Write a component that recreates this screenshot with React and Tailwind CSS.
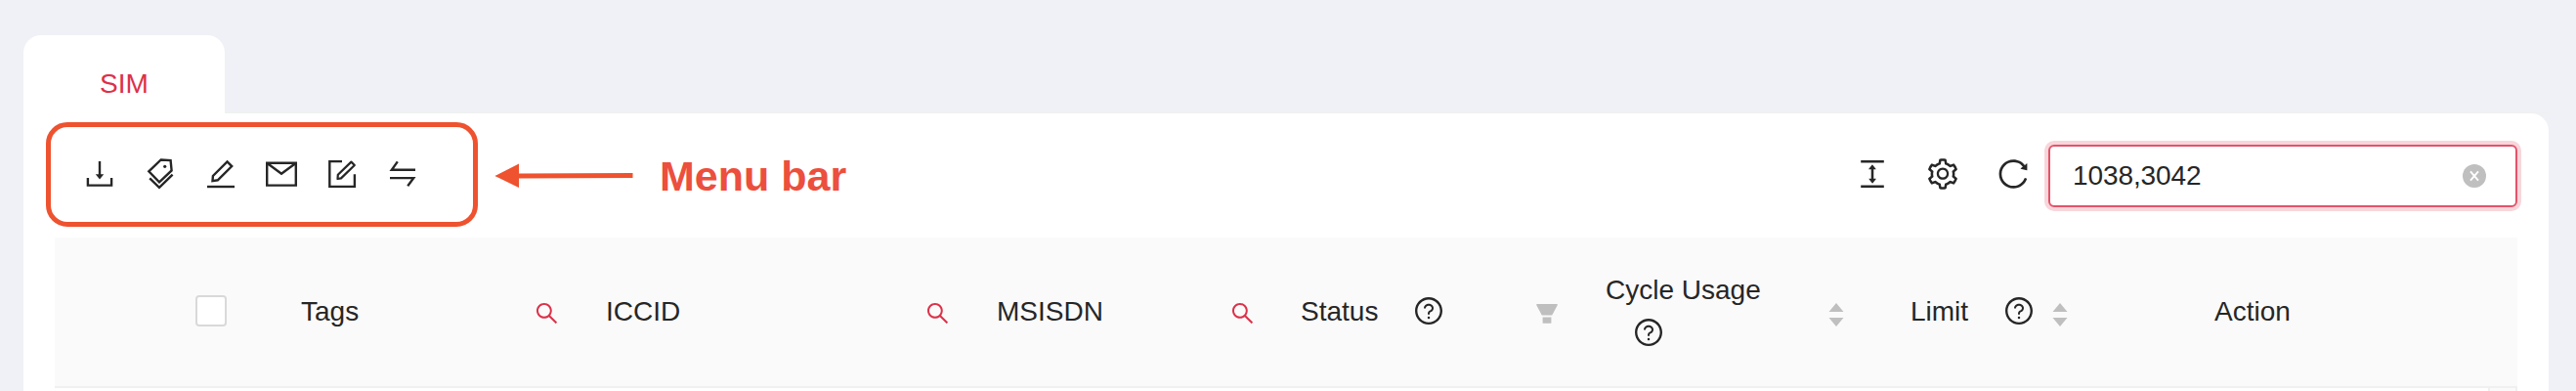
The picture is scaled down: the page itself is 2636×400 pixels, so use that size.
import React from "react";
import {
  AiOutlineColumnHeight,
  AiOutlineSetting,
  AiOutlineReload,
  AiOutlineQuestionCircle,
  AiOutlineSearch,
} from "react-icons/ai";

function Icon({ children }) {
  return (
    <svg viewBox="0 0 32 32" className="size-8 shrink-0" fill="none" stroke="currentColor" strokeWidth="2.4">
      {children}
    </svg>
  );
}

function MenuIcons() {
  return (
    <div className="flex items-center gap-[30px]">
      <Icon>
        <path d="M3.9 20v7.6h24.2V20M16 3v15" />
        <path d="M11.8 16.2h8.4L16 21.5z" fill="currentColor" stroke="none" />
      </Icon>
      <Icon>
        <path d="M16.7 1.5l9.9.6 1 10.400L15 24.300 4.300 13.300z" />
        <path d="M5.2 20.300l9.8 9.600 13.600-13.300" />
        <circle cx="20.7" cy="8.3" r="1.6" fill="currentColor" stroke="none" />
      </Icon>
      <Icon>
        <path d="M22.5 3.4l4.7 4.7-14.4 14.2-5.3.8.4-5.1z" />
        <path d="M2 29h28" />
      </Icon>
      <Icon>
        <path d="M1.2 4.7h29.6v22.9H1.2zM1.5 5L16 15.800 30.500 5" />
      </Icon>
      <Icon>
        <path d="M16 3.1H3.3v25.8h25.600V16.300" />
        <path d="M25.400 3.600l3.400 3.400-13.800 13.400-3.500.6.300-4.200z" strokeWidth="2.2" strokeLinejoin="round" />
      </Icon>
      <Icon>
        <path d="M29 11.800H4.800l6-8.400M3 20.100h24.200l-6 8.200" />
      </Icon>
    </div>
  );
}

function Sorter() {
  return (
    <svg viewBox="0 0 16 24" className="w-4 h-6 shrink-0" fill="#bfbfbf">
      <path d="M8 0l7.5 9H.5zM8 24l7.5-9H.5z" />
    </svg>
  );
}

function Filter() {
  return (
    <svg viewBox="0 0 22 20" className="w-[22px] h-5 shrink-0" fill="#bfbfbf">
      <path d="M.9 0h20.2q1.1.2.6 1.2L16.2 11.4H5.8L.3 1.2Q-.1.2.9 0zM6.6 13.5h8.8v5.7q0 .6-.6.6H7.2q-.6 0-.6-.6z" />
    </svg>
  );
}

function Search() {
  return <AiOutlineSearch className="ml-auto mt-[3px] size-[27px] shrink-0 text-[#dc3149]" />;
}

function Help({ className }) {
  return <AiOutlineQuestionCircle className={"size-8 shrink-0 " + className} />;
}

export default function App() {
  return (
    <div className="relative h-[400px] w-[2636px] overflow-hidden bg-[#f0f1f6] pl-6 pr-7 pt-9 font-['Liberation_Sans',sans-serif] text-[28px] leading-[44px] text-[#262626]">
      <div className="flex h-20 items-end">
        <div className="flex h-20 w-[206px] items-center justify-center rounded-t-[18px] bg-white pt-[19px] text-[#dc3149]">
          <span>SIM</span>
        </div>
        <div className="h-0.5 flex-1 bg-[#eff1f1]" />
      </div>

      <main className="h-[284px] rounded-tr-[18px] bg-white px-8">
        <div className="flex h-[127px] items-center">
          <div className="-mt-[3px] pl-[30px]">
            <MenuIcons />
          </div>
          <div className="ml-auto flex items-center">
            <div className="-mt-1 mr-[18px] flex items-center gap-9">
              <AiOutlineColumnHeight className="size-9" />
              <AiOutlineSetting className="size-9" />
              <AiOutlineReload className="size-9" />
            </div>
            <div className="flex h-16 w-[480px] items-center justify-between rounded-[6px] border-2 border-[#e4536a] bg-white pl-[23px] pr-[30px] ring-4 ring-[#f8d6db]">
              <span className="tracking-[-0.1px]">1038,3042</span>
              <svg viewBox="0 0 24 24" className="size-6">
                <circle cx="12" cy="12" r="12" fill="#bfbfbf" />
                <path d="M8 7.3l8 9.4M16 7.3l-8 9.4" stroke="#fff" strokeWidth="1.9" />
              </svg>
            </div>
          </div>
        </div>

        <div className="flex h-[154px] border-b-2 border-[#f0f0f0] bg-[#fafafa]">
          <div className="flex w-[220px] items-center pl-36">
            <div className="-mt-0.5 size-8 rounded-[4px] border-2 border-[#d9d9d9] bg-white" />
          </div>
          <div className="flex w-[312px] items-center pl-8 pr-[15px]">
            <span>Tags</span>
            <Search />
          </div>
          <div className="flex w-[400px] items-center pl-8 pr-[15px]">
            <span>ICCID</span>
            <Search />
          </div>
          <div className="flex w-[312px] items-center pl-8 pr-[15px]">
            <span>MSISDN</span>
            <Search />
          </div>
          <div className="flex w-[312px] items-center pl-[31px] pr-[18px]">
            <span>Status</span>
            <Help className="-mt-0.5 ml-9" />
            <div className="ml-auto mt-1">
              <Filter />
            </div>
          </div>
          <div className="flex w-[312px] items-center justify-between pl-[31px] pr-[37px]">
            <div>
              <div>Cycle Usage</div>
              <div className="flex h-11 items-center pl-7">
                <Help className="-mt-0.5" />
              </div>
            </div>
            <div className="mt-[5px]">
              <Sorter />
            </div>
          </div>
          <div className="flex w-[312px] items-center pl-[31px]">
            <span>Limit</span>
            <Help className="-mt-0.5 ml-9" />
            <div className="ml-[18px] mt-[5px]">
              <Sorter />
            </div>
          </div>
          <div className="flex flex-1 items-center pl-[30px]">
            <span>Action</span>
          </div>
        </div>

        <div className="flex h-[3px] justify-end">
          <div className="w-[30px] border-x-2 border-[#f0f0f0] bg-[#fafafa]" />
        </div>
      </main>

      <div className="absolute left-[47px] top-[125px] h-[107px] w-[442px] rounded-[22px] border-5 border-[#ee522f]" />
      <div className="absolute left-[506px] top-[158px] flex items-center">
        <svg viewBox="0 0 142 26" className="h-[26px] w-[142px]" fill="#ee522f">
          <path d="M.3 13L25 .5v10l116.500-.6v5L25 15.500V25z" />
        </svg>
        <span className="ml-[27px] text-[43px] font-bold text-[#ec4f3d]">Menu bar</span>
      </div>
    </div>
  );
}
